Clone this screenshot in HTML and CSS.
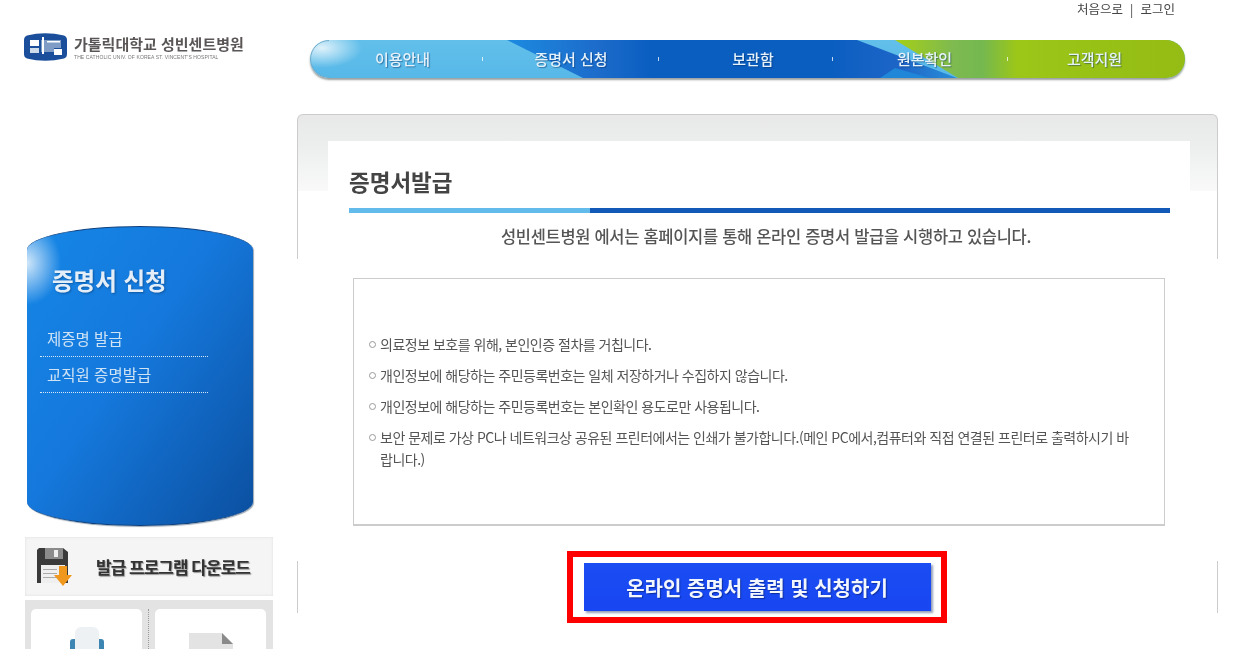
FILE: index.html
```html
<!DOCTYPE html>
<html lang="ko">
<head>
  <meta charset="UTF-8" />
  <meta name="viewport" content="width=device-width, initial-scale=1.0"/>
  <title>증명서발급</title>
  <link rel="stylesheet" href="styles.css">
</head>
<body>
  <div class="page">
    <div class="util">처음으로 &nbsp;|&nbsp; 로그인</div>

    <div class="header">
      <div class="logo">
        <svg class="logo-mark" width="43" height="30" viewBox="0 0 43 30">
          <path d="M3 3.5Q21 -1 40 3.5Q43 4.5 43 8V22Q43 25.5 40 26.5Q21 31 3 26.5Q0 25.5 0 22V8Q0 4.5 3 3.5Z" fill="#1b4f9c"/>
          <rect x="6" y="8" width="9" height="6" fill="#fff"/>
          <rect x="6" y="16" width="9" height="5" fill="#cfdcec"/>
          <path d="M17 8H37V16H30V20H17Z" fill="#7f9cc6"/>
          <rect x="18" y="5" width="2" height="17" fill="#fff"/>
          <rect x="30" y="17" width="8" height="6" fill="#fff"/>
          <rect x="23" y="9" width="13" height="1.5" fill="#fff"/>
        </svg>
        <div class="logo-text">
          <div class="logo-ko">가톨릭대학교 성빈센트병원</div>
          <div class="logo-en">THE CATHOLIC UNIV. OF KOREA ST. VINCENT'S HOSPITAL</div>
        </div>
      </div>

      <div class="nav">
        <svg class="nav-bg" width="875" height="38" viewBox="0 0 875 38">
          <defs>
            <linearGradient id="navLight" x1="0" y1="0" x2="0" y2="1">
              <stop offset="0" stop-color="#62bfea"/>
              <stop offset="1" stop-color="#57b8e8"/>
            </linearGradient>
            <linearGradient id="navBlue" gradientUnits="userSpaceOnUse" x1="197" y1="0" x2="647" y2="0">
              <stop offset="0" stop-color="#1c8ae0"/>
              <stop offset="0.2" stop-color="#1d6ccb"/>
              <stop offset="0.32" stop-color="#0a5ec0"/>
              <stop offset="0.72" stop-color="#0a5ec0"/>
              <stop offset="0.88" stop-color="#1e66c8"/>
              <stop offset="1" stop-color="#2a8fd8"/>
            </linearGradient>
            <linearGradient id="navGreen" gradientUnits="userSpaceOnUse" x1="585" y1="0" x2="875" y2="0">
              <stop offset="0" stop-color="#a6cf14"/>
              <stop offset="0.2" stop-color="#7eba50"/>
              <stop offset="0.3" stop-color="#74b850"/>
              <stop offset="0.42" stop-color="#9cc618"/>
              <stop offset="1" stop-color="#94bc14"/>
            </linearGradient>
            <radialGradient id="navShine" cx="0.5" cy="0.5" r="0.5">
              <stop offset="0" stop-color="#fff" stop-opacity="0.8"/>
              <stop offset="1" stop-color="#fff" stop-opacity="0"/>
            </radialGradient>
          </defs>
          <rect width="875" height="38" fill="url(#navLight)"/>
          <ellipse cx="12" cy="8" rx="40" ry="20" fill="url(#navShine)"/>
          <polygon points="197,0 547,0 647,38 273,38" fill="url(#navBlue)"/>
          <polygon points="570,38 585,28 620,38" fill="#1f86d8"/>
          <polygon points="585,0 875,0 875,38 648,38" fill="url(#navGreen)"/>
          <path d="M19 .5A18.5 18.5 0 0 0 19 37.5" fill="none" stroke="#6fa9c8"/>
        </svg>
        <a class="nav-item">이용안내</a>
        <a class="nav-item">증명서 신청</a>
        <a class="nav-item">보관함</a>
        <a class="nav-item">원본확인</a>
        <a class="nav-item">고객지원</a>
      </div>
    </div>

    <div class="content">
      <div class="sidebar">
        <div class="side-menu">
          <h2>증명서 신청</h2>
          <ul>
            <li>제증명 발급</li>
            <li>교직원 증명발급</li>
          </ul>
        </div>

        <div class="download">
          <svg width="40" height="40" viewBox="0 0 40 40">
            <path d="M6 1H30L35 5V36H4V3Z" fill="#3a3a3a"/>
            <rect x="12" y="1" width="18" height="11" fill="#8b8b8b"/>
            <rect x="21" y="3" width="4" height="7" fill="#eee"/>
            <rect x="8" y="18" width="24" height="18" fill="#efefef"/>
            <rect x="10" y="22" width="14" height="1" fill="#aaa"/>
            <rect x="10" y="26" width="14" height="1" fill="#aaa"/>
            <rect x="10" y="30" width="14" height="1" fill="#aaa"/>
            <path d="M26 19H34V28H39L30 39L21 28H26Z" fill="#f0971e"/>
          </svg>
          <span>발급 프로그램 다운로드</span>
        </div>

        <div class="tools">
          <div class="tool-card">
            <svg width="34" height="44" viewBox="0 0 34 44">
              <rect x="0" y="12" width="34" height="32" rx="3" fill="#3d86b4"/>
              <rect x="5" y="0" width="24" height="44" rx="6" fill="#eef1f4"/>
            </svg>
          </div>
          <div class="tool-sep"></div>
          <div class="tool-card">
            <svg width="44" height="40" viewBox="0 0 44 40">
              <path d="M0 0H33L44 11V40H0Z" fill="#e3e3e3"/>
              <path d="M33 0L44 11H33Z" fill="#8a8a8a"/>
            </svg>
          </div>
        </div>
      </div>

      <div class="main">
        <div class="panel-top">
          <div class="panel-inner">
            <h1>증명서발급</h1>
            <div class="rule"><span></span></div>
            <p class="lead">성빈센트병원 에서는 홈페이지를 통해 온라인 증명서 발급을 시행하고 있습니다.</p>
          </div>
        </div>

        <div class="notice">
          <ul>
            <li>의료정보 보호를 위해, 본인인증 절차를 거칩니다.</li>
            <li>개인정보에 해당하는 주민등록번호는 일체 저장하거나 수집하지 않습니다.</li>
            <li>개인정보에 해당하는 주민등록번호는 본인확인 용도로만 사용됩니다.</li>
            <li>보안 문제로 가상 PC나 네트워크상 공유된 프린터에서는 인쇄가 불가합니다.(메인 PC에서,컴퓨터와 직접 연결된 프린터로 출력하시기 바랍니다.)</li>
          </ul>
        </div>

        <div class="panel-foot">
          <div class="highlight">
            <button type="button">온라인 증명서 출력 및 신청하기</button>
          </div>
        </div>
      </div>
    </div>
  </div>
</body>
</html>
```

FILE: styles.css
```css
* {
  box-sizing: border-box;
}

html, body {
  margin: 0;
  padding: 0;
  height: 100%;
  overflow: hidden;
  background-color: #fff;
}

body {
  font-family: "Noto Sans CJK KR", "Liberation Sans", sans-serif;
  color: #444;
}

.page {
  width: 1258px;
  height: 649px;
  overflow: hidden;
  filter: blur(0.4px);
}

.util {
  height: 32px;
  padding: 1px 83px 0 0;
  text-align: right;
  font-size: 12.5px;
  line-height: 16px;
  color: #444;
}

/* header */
.header {
  display: flex;
  height: 82px;
  padding-left: 24px;
}

.logo {
  display: flex;
  gap: 7px;
  width: 286px;
  height: 30px;
}

.logo-ko {
  font-size: 15px;
  font-weight: 700;
  line-height: 18px;
  margin-top: 3px;
  color: #5a5656;
  white-space: nowrap;
}

.logo-en {
  font-family: "Liberation Sans", sans-serif;
  font-size: 5px;
  line-height: 8px;
  letter-spacing: 0.1px;
  color: #777;
  white-space: nowrap;
}

.nav {
  position: relative;
  display: grid;
  grid-template-columns: 173px 176px 174px 175px 177px;
  width: 875px;
  height: 38px;
  margin-top: 8px;
  border-radius: 19px;
  box-shadow: 0 2px 2px rgba(70, 80, 80, 0.55);
}

.nav-bg {
  position: absolute;
  top: 0;
  left: 0;
  border-radius: 19px;
}

.nav-item {
  position: relative;
  text-align: center;
  font-size: 15px;
  font-weight: 500;
  line-height: 38px;
  color: #e6f2fa;
  text-shadow: 1px 1px 1px rgba(0, 40, 90, 0.45);
}

.nav-item:nth-of-type(1) { padding-left: 12px; }
.nav-item:nth-of-type(3) { padding-left: 14px; }
.nav-item:nth-of-type(4) { padding-left: 8px; }
.nav-item:nth-of-type(5) { padding-right: 4px; }

.nav-item:not(:last-of-type)::after {
  content: "";
  position: absolute;
  right: 0;
  top: 17px;
  width: 1px;
  height: 4px;
  background-color: rgba(255, 255, 255, 0.75);
}

/* body */
.content {
  display: flex;
}

.sidebar {
  width: 272px;
  margin-left: 25px;
  padding-top: 112px;
}

.side-menu {
  width: 226px;
  height: 300px;
  margin-left: 2px;
  padding-top: 37px;
  border-top: 1px solid #0d3f7e;
  border-bottom: 1px solid #0c3f7c;
  border-radius: 50% / 24px;
  background:
    radial-gradient(ellipse 34px 42px at 0 36px, rgba(255, 255, 255, 0.8), rgba(255, 255, 255, 0)),
    linear-gradient(125deg, #1587e6 0%, #1578dc 45%, #0b4f9f 100%);
  box-shadow: 1px 1px 1px rgba(90, 110, 130, 0.6);
}

.side-menu h2 {
  margin: 0;
  padding-left: 25px;
  font-size: 23.5px;
  line-height: 32px;
  color: #e4eef8;
  text-shadow: 1px 1px 2px rgba(0, 30, 70, 0.4);
}

.side-menu ul {
  list-style: none;
  margin: 25px 0 0 13px;
  padding: 0;
  width: 168px;
}

.side-menu li {
  padding: 7px 0 8px 7px;
  border-bottom: 1px dotted #d5e6f5;
  font-size: 15.5px;
  line-height: 20px;
  color: #cfe3f5;
  white-space: nowrap;
}

.download {
  display: flex;
  align-items: center;
  width: 248px;
  height: 59px;
  margin-top: 11px;
  padding-left: 8px;
  gap: 23px;
  background-color: #f5f5f5;
  box-shadow: inset 0 0 3px #ddd;
}

.download span {
  font-size: 17px;
  font-weight: 700;
  letter-spacing: -1px;
  color: #333;
  text-shadow: 1px 1px 1px #999;
  white-space: nowrap;
}

.tools {
  display: flex;
  width: 248px;
  height: 120px;
  margin-top: 4px;
  padding: 9px 7px 0 6px;
  background-color: #e3e3e3;
}

.tool-card {
  display: flex;
  justify-content: center;
  align-items: flex-start;
  width: 111px;
  height: 100px;
  border-radius: 5px;
  background-color: #fff;
}

.tool-card:first-child {
  padding-top: 18px;
}

.tool-card:last-child {
  padding-top: 24px;
}

.tool-sep {
  width: 1px;
  height: 100px;
  margin: 0 6px;
  border-left: 1px dotted #999;
}

/* main panel */
.main {
  width: 921px;
}

.panel-top {
  height: 145px;
  padding: 26px 27px 0 30px;
  border: 1px solid #ccc;
  border-bottom: none;
  border-radius: 6px 6px 0 0;
  background: linear-gradient(#e8e8e8, #eceeee 40%, #f9f9f9) no-repeat top / 100% 76px;
}

.panel-inner {
  height: 118px;
  padding: 24px 20px 0 21px;
  background-color: #fff;
}

.panel-inner h1 {
  margin: 0;
  font-size: 22.5px;
  font-weight: 700;
  line-height: 32px;
  color: #444;
}

.rule {
  height: 5px;
  margin-top: 11px;
  background-color: #1359b8;
}

.rule span {
  display: block;
  width: 241px;
  height: 100%;
  background-color: #62bbea;
}

.lead {
  margin: 0;
  padding-left: 13px;
  text-align: center;
  font-size: 16.5px;
  font-weight: 500;
  line-height: 46px;
  letter-spacing: -0.3px;
  color: #555;
  white-space: nowrap;
}

.notice {
  width: 812px;
  height: 248px;
  margin: 19px 0 0 56px;
  padding: 54px 30px 0 15px;
  border: 1px solid #ccc;
  border-bottom-width: 2px;
}

.notice ul {
  list-style: none;
  margin: 0;
  padding: 0;
}

.notice li {
  display: flex;
  gap: 4px;
  margin-bottom: 9px;
  font-size: 14px;
  line-height: 22px;
  letter-spacing: -0.5px;
  color: #555;
  word-break: break-all;
}

.notice li::before {
  content: "";
  flex: none;
  width: 5px;
  height: 5px;
  margin-top: 8px;
  border: 1px solid #999;
  border-radius: 50%;
}

.panel-foot {
  display: flex;
  justify-content: center;
  align-items: center;
  height: 52px;
  margin-top: 35px;
  border-left: 1px solid #ccc;
  border-right: 1px solid #ccc;
}

.highlight {
  display: flex;
  flex: none;
  justify-content: center;
  align-items: center;
  width: 380px;
  height: 72px;
  margin-left: -1px;
  border: 6px solid #f00;
  background-color: #fff;
}

.highlight button {
  width: 347px;
  height: 48px;
  padding: 0;
  border: none;
  background: linear-gradient(#1a4df2, #1846f2);
  box-shadow: 2px 2px 2px rgba(60, 80, 130, 0.55);
  font-family: inherit;
  font-size: 20px;
  font-weight: 700;
  color: #f2f6ff;
  text-shadow: 1px 1px 1px rgba(0, 20, 80, 0.5);
}
```
